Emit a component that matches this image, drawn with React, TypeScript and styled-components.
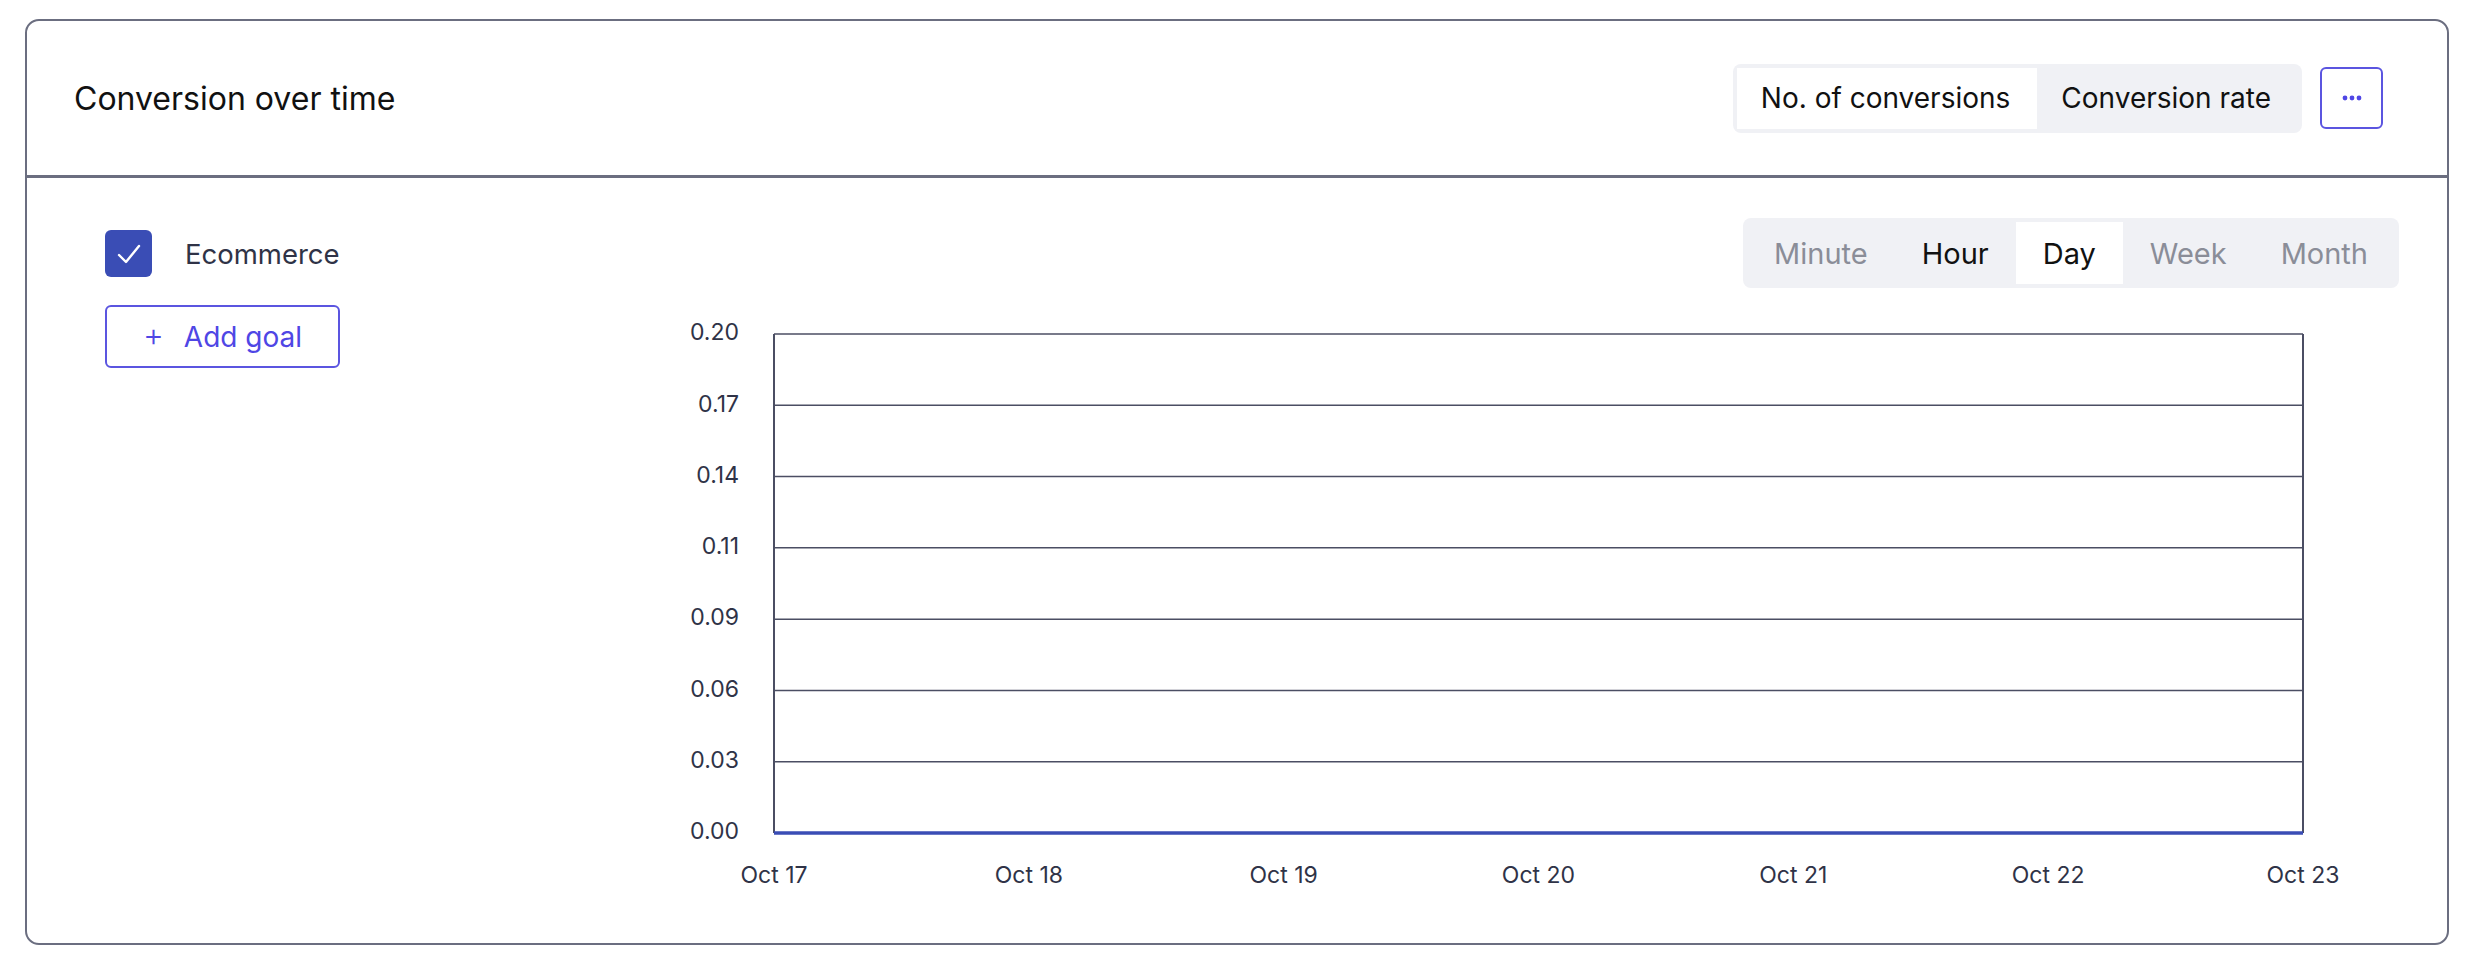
import React, { useState } from 'react';
import styled, { createGlobalStyle } from 'styled-components';

const Global = createGlobalStyle`
  body { margin: 0; background: #fff; font-family: Inter, "Noto Sans", sans-serif; }
`;

const yTicks = ['0.20', '0.17', '0.14', '0.11', '0.09', '0.06', '0.03', '0.00'];
const xTicks = ['Oct 17', 'Oct 18', 'Oct 19', 'Oct 20', 'Oct 21', 'Oct 22', 'Oct 23'];

const PLOT_L = 124;
const PLOT_R = 1653;
const PLOT_T = 30;
const PLOT_B = 529;

function Chart() {
  const step = (PLOT_B - PLOT_T) / (yTicks.length - 1);
  const xStep = (PLOT_R - PLOT_L) / (xTicks.length - 1);
  return (
    <svg width={1749} height={610}>
      {yTicks.map((t, i) => {
        const y = PLOT_T + i * step;
        return (
          <g key={t}>
            {i < yTicks.length - 1 && (
              <line x1={PLOT_L} x2={PLOT_R} y1={y} y2={y} stroke="#4b4e63" strokeWidth={1.5} />
            )}
            <text x={89} y={y} textAnchor="end" dominantBaseline="middle" fontSize={23} fill="#2f3347" fontFamily="Inter, sans-serif">
              {t}
            </text>
          </g>
        );
      })}
      <line x1={PLOT_L} x2={PLOT_L} y1={PLOT_T} y2={PLOT_B} stroke="#4b4e63" strokeWidth={2} />
      <line x1={PLOT_R} x2={PLOT_R} y1={PLOT_T} y2={PLOT_B} stroke="#4b4e63" strokeWidth={2} />
      <line x1={PLOT_L} x2={PLOT_R} y1={PLOT_B} y2={PLOT_B} stroke="#3a4db5" strokeWidth={3.5} />
      {xTicks.map((t, i) => (
        <text key={t} x={PLOT_L + i * xStep} y={573} textAnchor="middle" dominantBaseline="middle" fontSize={23} fill="#2f3347" fontFamily="Inter, sans-serif">
          {t}
        </text>
      ))}
    </svg>
  );
}

export default function App() {
  const [metric, setMetric] = useState('count');
  const [period, setPeriod] = useState('Day');
  return (
    <Page>
      <Global />
      <Card>
        <Header>
          <Title>Conversion over time</Title>
          <HeaderActions>
            <Segmented>
              <SegButton $active={metric === 'count'} onClick={() => setMetric('count')}>No. of conversions</SegButton>
              <SegButton $active={metric === 'rate'} onClick={() => setMetric('rate')}>Conversion rate</SegButton>
            </Segmented>
            <MoreButton>
              <svg width="20" height="6" viewBox="0 0 20 6">
                <circle cx="3" cy="3" r="2.4" fill="#4f46e5" />
                <circle cx="10" cy="3" r="2.4" fill="#4f46e5" />
                <circle cx="17" cy="3" r="2.4" fill="#4f46e5" />
              </svg>
            </MoreButton>
          </HeaderActions>
        </Header>
        <Body>
          <Goals>
            <GoalRow>
              <Check>
                <svg width="26" height="22" viewBox="0 0 26 22">
                  <path d="M3 12 L10 19 L23 3" fill="none" stroke="#fff" strokeWidth="2.4" strokeLinecap="round" strokeLinejoin="round" />
                </svg>
              </Check>
              <GoalLabel>Ecommerce</GoalLabel>
            </GoalRow>
            <AddGoal>
              <span>+</span>Add goal
            </AddGoal>
          </Goals>
          <ChartArea>
            <PeriodBar>
              {['Minute', 'Hour', 'Day', 'Week', 'Month'].map((p) => (
                <PeriodButton
                  key={p}
                  $active={period === p}
                  $enabled={p === 'Hour' || p === 'Day'}
                  onClick={() => setPeriod(p)}
                >
                  {p}
                </PeriodButton>
              ))}
            </PeriodBar>
            <Chart />
          </ChartArea>
        </Body>
      </Card>
    </Page>
  );
}

const Page = styled.div`
  padding: 19px 17px 21px 25px;
`;
const Card = styled.div`
  border: 2px solid #6b6e80;
  border-radius: 14px;
  height: 926px;
  box-sizing: border-box;
  overflow: hidden;
`;
const Header = styled.div`
  height: 157px;
  box-sizing: border-box;
  border-bottom: 3px solid #6b6e80;
  display: flex;
  align-items: center;
  justify-content: space-between;
  padding: 0 64px 0 47px;
`;
const Title = styled.h2`
  margin: 0;
  font-size: 32px;
  font-weight: 400;
  color: #111;
`;
const HeaderActions = styled.div`
  display: flex;
  align-items: center;
  gap: 18px;
`;
const Segmented = styled.div`
  display: flex;
  background: #f0f1f5;
  border-radius: 8px;
  padding: 4px;
  height: 69px;
  box-sizing: border-box;
`;
const SegButton = styled.button<{ $active: boolean }>`
  border: none;
  background: ${(p) => (p.$active ? '#fff' : 'transparent')};
  font-family: inherit;
  font-size: 28px;
  color: #111;
  padding: 0 27px 0 24px;
  cursor: pointer;
`;
const MoreButton = styled.button`
  width: 63px;
  height: 62px;
  border: 2px solid #5b55e0;
  border-radius: 6px;
  background: #fff;
  display: flex;
  align-items: center;
  justify-content: center;
  cursor: pointer;
`;
const Body = styled.div`
  display: flex;
  padding: 40px 48px 0 78px;
`;
const Goals = styled.div`
  width: 545px;
  display: flex;
  flex-direction: column;
  align-items: flex-start;
  padding-top: 12px;
  gap: 28px;
`;
const GoalRow = styled.div`
  display: flex;
  align-items: center;
  gap: 33px;
`;
const Check = styled.div`
  width: 47px;
  height: 47px;
  border-radius: 6px;
  background: #3a4db5;
  display: flex;
  align-items: center;
  justify-content: center;
`;
const GoalLabel = styled.span`
  font-size: 27.5px;
  color: #2f3347;
`;
const AddGoal = styled.button`
  width: 235px;
  height: 63px;
  border: 2px solid #5b55e0;
  border-radius: 6px;
  background: #fff;
  color: #4f46e5;
  font-family: inherit;
  font-size: 28px;
  display: flex;
  align-items: center;
  justify-content: center;
  gap: 20px;
  cursor: pointer;
  span {
    font-size: 32px;
    font-weight: 300;
    margin-top: -4px;
  }
`;
const ChartArea = styled.div`
  display: flex;
  flex-direction: column;
  align-items: flex-end;
  gap: 16px;
`;
const PeriodBar = styled.div`
  display: flex;
  background: #f0f1f5;
  border-radius: 8px;
  padding: 4px;
  height: 70px;
  box-sizing: border-box;
`;
const PeriodButton = styled.button<{ $active: boolean; $enabled: boolean }>`
  border: none;
  background: ${(p) => (p.$active ? '#fff' : 'transparent')};
  font-family: inherit;
  font-size: 29px;
  color: ${(p) => (p.$enabled ? '#111' : '#8a8d98')};
  padding: 0 27px;
  cursor: pointer;
`;
